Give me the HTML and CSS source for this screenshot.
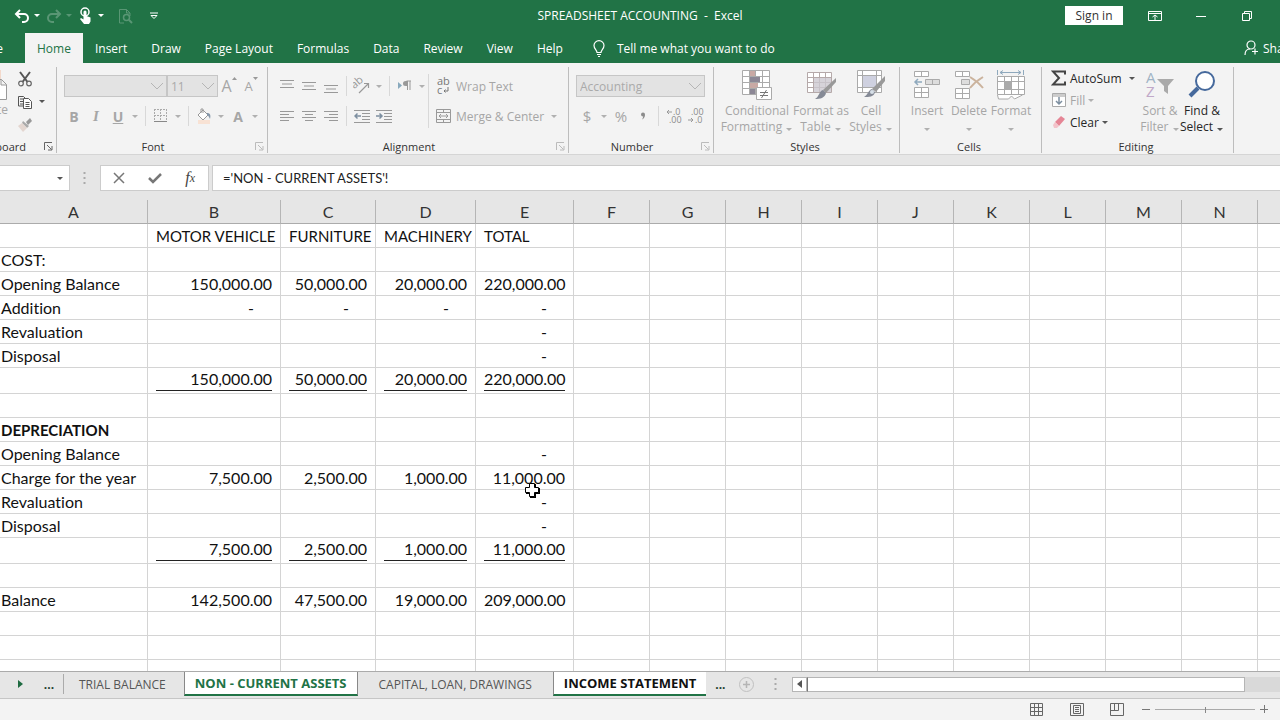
FILE: index.html
```
<!DOCTYPE html>
<html lang="en">
<head>
    <meta charset="UTF-8">
    <meta name="viewport" content="width=device-width, initial-scale=1.0">
    <title>SPREADSHEET ACCOUNTING - Excel</title>
    <link rel="stylesheet" href="styles.css">
</head>
<body>
    <!-- Title bar -->
    <header class="titlebar">
        <div class="quick">
            <button class="quick-btn" aria-label="Undo"><svg width="16" height="16" viewBox="0 0 16 16"><path d="M6 2L2 6l4 4M2 6h8a4 4 0 0 1 0 8H8" fill="none" stroke="#fff" stroke-width="2"/></svg></button>
            <span class="arrow white"></span>
            <button class="quick-btn dim" aria-label="Redo"><svg width="16" height="16" viewBox="0 0 16 16"><path d="M10 2l4 4-4 4M14 6H6a4 4 0 0 0 0 8h2" fill="none" stroke="#fff" stroke-width="2"/></svg></button>
            <span class="arrow white dim"></span>
            <button class="quick-btn" aria-label="Touch mode"><svg width="16" height="18" viewBox="0 0 16 18"><circle cx="7" cy="5" r="4" fill="none" stroke="#fff" stroke-width="1.5"/><path d="M5.500 5a1.500 1.500 0 0 1 3 0v4l4 1.500v4L11 17H6l-4-5 1-1 2.500 1.500z" fill="#fff"/></svg></button>
            <span class="arrow white"></span>
            <button class="quick-btn dim" aria-label="Print preview"><svg width="16" height="16" viewBox="0 0 16 16"><path d="M6 15H1.500V1.500h7L12 5v3M8.500 1.500V5H12" fill="none" stroke="#fff"/><circle cx="8.500" cy="9.500" r="3" fill="none" stroke="#fff" stroke-width="1.500"/><path d="M11 12l3 3" stroke="#fff" stroke-width="2"/></svg></button>
            <button class="quick-btn" aria-label="Customize toolbar"><svg width="10" height="8" viewBox="0 0 10 8"><path d="M1 1h8M2 3.500h6L5 6.500z" fill="none" stroke="#fff"/></svg></button>
        </div>
        <div class="doc-name">SPREADSHEET ACCOUNTING &nbsp;-&nbsp; Excel</div>
        <div class="window-tools">
            <button class="sign-in">Sign in</button>
            <button class="window-btn" aria-label="Ribbon options"><svg width="14" height="12" viewBox="0 0 14 12"><path d="M.5 1.500h13v9H.5zM.5 3.500h13M7 10V5M4.500 7L7 5l2.500 2" fill="none" stroke="#fff"/></svg></button>
            <button class="window-btn" aria-label="Minimize"><svg width="10" height="12" viewBox="0 0 10 12"><path d="M0 6.500h10" stroke="#fff"/></svg></button>
            <button class="window-btn" aria-label="Restore"><svg width="12" height="12" viewBox="0 0 12 12"><path d="M1.500 3.500h7v7h-7zM3.500 3.500v-2h7v7h-2" fill="none" stroke="#fff"/></svg></button>
        </div>
    </header>

    <nav class="tabs">
        <a class="tab file" href="#">File</a>
        <a class="tab active" href="#">Home</a>
        <a class="tab" href="#">Insert</a>
        <a class="tab" href="#">Draw</a>
        <a class="tab" href="#">Page Layout</a>
        <a class="tab" href="#">Formulas</a>
        <a class="tab" href="#">Data</a>
        <a class="tab" href="#">Review</a>
        <a class="tab" href="#">View</a>
        <a class="tab" href="#">Help</a>
        <a class="tab tell" href="#"><svg width="12" height="17" viewBox="0 0 12 17"><path d="M4 12.500C4 10 1 9 1 5.500a5 4.800 0 0 1 10 0C11 9 8 10 8 12.500zM4 14.500h4M5 16.500h2" fill="none" stroke="#fff" stroke-width="1.200"/></svg>Tell me what you want to do</a>
        <a class="tab share" href="#"><svg width="15" height="16" viewBox="0 0 15 16"><circle cx="7" cy="5" r="4" fill="none" stroke="#fff" stroke-width="1.200"/><path d="M1 15c0-4 2-6 5-6M11 8.500v6M8 11.500h6" fill="none" stroke="#fff" stroke-width="1.200"/></svg>Share</a>
    </nav>

    <!-- Ribbon -->
    <section class="ribbon">
        <div class="group clipboard">
            <div class="group-body">
                <button class="paste off"><svg width="26" height="34" viewBox="0 0 26 34"><path d="M1 3h18v27H1z" fill="#f3d9cb"/><path d="M8.500 12.500h11l5 5v15h-16zM19 12.500v5.500h5.500" fill="#fff" stroke="#999"/></svg>Paste</button>
                <div class="stack">
                    <button class="tool" aria-label="Cut"><svg width="16" height="16" viewBox="0 0 16 16"><path d="M3 1l7.500 10M13 1L5.500 11" stroke="#555" stroke-width="2"/><circle cx="4" cy="12.500" r="2.300" fill="none" stroke="#666" stroke-width="1.200"/><circle cx="12" cy="12.500" r="2.300" fill="none" stroke="#666" stroke-width="1.200"/></svg></button>
                    <div class="row"><button class="tool" aria-label="Copy"><svg width="16" height="14" viewBox="0 0 16 14"><path d="M6 11H1.500V1.500h5L8 3M3 4h3M3 6.500h3M3 9h3" fill="none" stroke="#555"/><path d="M6.500 3.500h5l3 3v7h-8zM8.500 7.500h4M8.500 9.500h4M8.500 11.500h4" fill="#fff" stroke="#555"/></svg></button><span class="arrow dark"></span></div>
                    <button class="tool off" aria-label="Format painter"><svg width="16" height="14" viewBox="0 0 16 14"><path d="M9 4l4-4 2 3-4 4z" fill="#999"/><path d="M6 3l6 5-2 2-5-5z" fill="#aaa"/><path d="M5 5l5 5-4 4-5-6z" fill="#e3d6d0"/></svg></button>
                </div>
            </div>
            <div class="group-label"><span>Clipboard</span><svg class="launch" width="9" height="9" viewBox="0 0 9 9"><path d="M.5 8V.5H8M3 3l4.500 4.500M8 4v4H4" fill="none" stroke="#666"/></svg></div>
        </div>

        <div class="group font">
            <div class="group-body stack">
                <div class="row combos">
                    <label class="combo font-name"><select disabled aria-label="Font name"><option></option></select><svg width="14" height="8" viewBox="0 0 14 8"><path d="M1 1l6 6 6-6" fill="none" stroke="#b5b5b5"/></svg></label>
                    <label class="combo font-size"><select disabled aria-label="Font size"><option>11</option></select><svg width="14" height="8" viewBox="0 0 14 8"><path d="M1 1l6 6 6-6" fill="none" stroke="#b5b5b5"/></svg></label>
                    <button class="tool off grow" aria-label="Increase font size">A<svg width="5" height="12" viewBox="0 0 5 12"><path d="M0 5l2.500-3L5 5z" fill="#999"/></svg></button>
                    <button class="tool off shrink" aria-label="Decrease font size">A<svg width="5" height="12" viewBox="0 0 5 12"><path d="M0 2l2.500 3L5 2z" fill="#999"/></svg></button>
                </div>
                <div class="row">
                    <button class="tool off bold">B</button>
                    <button class="tool off italic">I</button>
                    <button class="tool off underline">U</button><span class="arrow"></span>
                    <span class="sep"></span>
                    <button class="tool off" aria-label="Borders"><svg width="14" height="14" viewBox="0 0 14 14"><path d="M.5 0v13M6.500 0v13M12.500 0v13M0 .5h13M0 6.500h13" fill="none" stroke="#aaa" stroke-dasharray="2 1"/><path d="M0 12.500h13" stroke="#888"/></svg></button><span class="arrow"></span>
                    <span class="sep"></span>
                    <button class="tool off" aria-label="Fill color"><svg width="16" height="16" viewBox="0 0 16 16"><path d="M2 12h12v4H2z" fill="#f8e2d4"/><path d="M2 7l5-5 5 5-5 5zM5 5V1h2v4" fill="#fff" stroke="#999"/><path d="M11 5c3 0 4 2 3 6-1-2-1-3-3-4z" fill="#8395a8"/></svg></button><span class="arrow"></span>
                    <button class="tool off bold">A</button><span class="arrow"></span>
                </div>
            </div>
            <div class="group-label"><span>Font</span><svg class="launch" width="9" height="9" viewBox="0 0 9 9"><path d="M.5 8V.5H8M3 3l4.500 4.500M8 4v4H4" fill="none" stroke="#bbb"/></svg></div>
        </div>

        <div class="group alignment">
            <div class="group-body">
                <div class="stack">
                    <div class="row">
                        <button class="tool off" aria-label="Top align"><svg width="14" height="16" viewBox="0 0 14 16"><path d="M0 2.500h14M2 6h10M0 9.500h14" stroke="#999"/></svg></button>
                        <button class="tool off" aria-label="Middle align"><svg width="14" height="16" viewBox="0 0 14 16"><path d="M0 4.500h14M2 8h10M0 11.500h14" stroke="#999"/></svg></button>
                        <button class="tool off" aria-label="Bottom align"><svg width="14" height="16" viewBox="0 0 14 16"><path d="M0 7.500h14M2 11h10M0 14.500h14" stroke="#999"/></svg></button>
                        <span class="sep"></span>
                        <button class="tool off" aria-label="Orientation"><svg width="18" height="18" viewBox="0 0 18 18"><text class="glyph" x="0" y="9" transform="rotate(-40 5 9)">ab</text><path d="M6 16l9-9M11 6.500h4.500V11" fill="none" stroke="#999" stroke-width="1.200"/></svg></button><span class="arrow"></span>
                        <span class="sep"></span>
                        <button class="tool off" aria-label="Text direction"><svg width="14" height="12" viewBox="0 0 14 12"><path d="M0 2l4 3.500L0 9z" fill="#88a9bd"/><path d="M8.500 6V1H13M9.500 1v9M12 1v9" fill="none" stroke="#999"/><circle cx="7.500" cy="3.500" r="2.500" fill="#999"/></svg></button><span class="arrow"></span>
                    </div>
                    <div class="row">
                        <button class="tool off" aria-label="Align left"><svg width="14" height="12" viewBox="0 0 14 12"><path d="M0 1.500h14M0 4.500h9M0 7.500h14M0 10.500h9" stroke="#999"/></svg></button>
                        <button class="tool off" aria-label="Center"><svg width="14" height="12" viewBox="0 0 14 12"><path d="M0 1.500h14M3 4.500h8M0 7.500h14M3 10.500h8" stroke="#999"/></svg></button>
                        <button class="tool off" aria-label="Align right"><svg width="14" height="12" viewBox="0 0 14 12"><path d="M0 1.500h14M5 4.500h9M0 7.500h14M5 10.500h9" stroke="#999"/></svg></button>
                        <span class="sep"></span>
                        <button class="tool off" aria-label="Decrease indent"><svg width="16" height="14" viewBox="0 0 16 14"><path d="M0 1.500h16M8 4.500h8M8 7.500h8M8 10.500h8M0 13.500h16" stroke="#999"/><path d="M7 7H1M3.500 4.500L1 7l2.500 2.500" fill="none" stroke="#7d8fa0" stroke-width="1.500"/></svg></button>
                        <button class="tool off" aria-label="Increase indent"><svg width="16" height="14" viewBox="0 0 16 14"><path d="M0 1.500h16M8 4.500h8M8 7.500h8M8 10.500h8M0 13.500h16" stroke="#999"/><path d="M0 7h6M3.500 4.500L6 7 3.500 9.500" fill="none" stroke="#7d8fa0" stroke-width="1.500"/></svg></button>
                    </div>
                </div>
                <span class="sep tall"></span>
                <div class="stack">
                    <button class="wide off"><svg width="16" height="18" viewBox="0 0 16 18"><text class="glyph dark" x="1" y="8">ab</text><text class="glyph dark" x="1" y="17">c</text><path d="M12 10v4H8M9.500 12.500L8 14l1.500 1.500" fill="none" stroke="#777"/></svg>Wrap Text</button>
                    <button class="wide off"><svg width="16" height="16" viewBox="0 0 16 16"><path d="M.5 1.500h14v13H.5zM.5 4.500h14M.5 11.500h14M7.500 1.500v3M7.500 11.500v3M3 8h9M5 6L3 8l2 2M10 6l2 2-2 2" fill="none" stroke="#999"/></svg>Merge &amp; Center <span class="arrow"></span></button>
                </div>
            </div>
            <div class="group-label"><span>Alignment</span><svg class="launch" width="9" height="9" viewBox="0 0 9 9"><path d="M.5 8V.5H8M3 3l4.500 4.500M8 4v4H4" fill="none" stroke="#bbb"/></svg></div>
        </div>

        <div class="group number">
            <div class="group-body stack">
                <div class="row"><label class="combo format"><select disabled aria-label="Number format"><option>Accounting</option></select><svg width="14" height="8" viewBox="0 0 14 8"><path d="M1 1l6 6 6-6" fill="none" stroke="#b5b5b5"/></svg></label></div>
                <div class="row">
                    <button class="tool off sign">$</button><span class="arrow"></span>
                    <button class="tool off sign">%</button>
                    <button class="tool off comma" aria-label="Comma style"><svg width="6" height="8" viewBox="0 0 6 8"><circle cx="3" cy="2.500" r="2" fill="#8c8c8c"/><path d="M5 2.500C5 5 4 6.500 2 7.500c1-1.500 1-2 1-3z" fill="#8c8c8c"/></svg></button>
                    <span class="sep"></span>
                    <button class="tool off" aria-label="Increase decimal"><svg width="16" height="16" viewBox="0 0 16 16"><path d="M6 4H1M3 2L1 4l2 2" fill="none" stroke="#999"/><text class="digits" x="7" y="7">.0</text><text class="digits" x="3" y="15">.00</text></svg></button>
                    <button class="tool off" aria-label="Decrease decimal"><svg width="16" height="16" viewBox="0 0 16 16"><text class="digits" x="3" y="7">.00</text><path d="M0 12h5M3 10l2 2-2 2" fill="none" stroke="#999"/><text class="digits" x="7" y="15">.0</text></svg></button>
                </div>
            </div>
            <div class="group-label"><span>Number</span><svg class="launch" width="9" height="9" viewBox="0 0 9 9"><path d="M.5 8V.5H8M3 3l4.500 4.500M8 4v4H4" fill="none" stroke="#bbb"/></svg></div>
        </div>

        <div class="group styles">
            <div class="group-body">
                <button class="big off"><svg width="30" height="30" viewBox="0 0 30 30"><path d="M.5.500h27v24H.5zM.5 6.500h27M.5 12.500h27M.5 18.500h27M7.500.500v24M13.500.500v24M20.500.500v24" fill="#fff" stroke="#aaa"/><path d="M8 1h5v5H8z" fill="#c9a9a4"/><path d="M8 7h10v5H8z" fill="#8c8795"/><path d="M8 13h8v5H8z" fill="#c9a9a4"/><path d="M8 19h5v5H8z" fill="#8c8795"/><path d="M14.500 17.500h15v12h-15z" fill="#fff" stroke="#aaa"/><path d="M18 22.500h8M18 25.500h8M24.500 20l-5 8" stroke="#777"/></svg><span>Conditional<br>Formatting <i class="arrow"></i></span></button>
                <button class="big off"><svg width="30" height="30" viewBox="0 0 30 30"><path d="M1.500 2.500h24v20h-24zM1.500 7.500h24M1.500 12.500h24M1.500 17.500h24M7.500 2.500v20M13.500 2.500v20M19.500 2.500v20" fill="#fff" stroke="#b5a9a9"/><path d="M8 8h17v14H8z" fill="#ccc8d0" opacity=".8"/><path d="M30 8v4L20 23l-3-3z" fill="#999"/><path d="M17 20l3 3c-1 5-6 6-11 6 4-2 4-8 8-9z" fill="#858a96"/></svg><span>Format as<br>Table <i class="arrow"></i></span></button>
                <button class="big off"><svg width="30" height="30" viewBox="0 0 30 30"><path d="M1.500.500h24v22h-24zM1.500 5.500h24M1.500 17.500h24M6.500.500v22M20.500.500v22" fill="#fff" stroke="#aaa"/><path d="M7 6h13v11H7z" fill="#cfd1e0"/><path d="M29 6v5L20 22l-4-3z" fill="#999"/><path d="M16 19l3 3c-1 5-6 5-11 5 4-2 4-7 8-8z" fill="#858a96"/><circle cx="16" cy="22" r="2" fill="#d7e0e8"/></svg><span>Cell<br>Styles <i class="arrow"></i></span></button>
            </div>
            <div class="group-label"><span>Styles</span></div>
        </div>

        <div class="group cells">
            <div class="group-body">
                <button class="big off"><svg width="28" height="30" viewBox="0 0 28 30"><path d="M1.500 1.500h14v5h-14zM8.500 1.500v5M1.500 17.500h14v10h-14zM1.500 22.500h14M8.500 17.500v10" fill="#fff" stroke="#aaa"/><path d="M12.500 9.500h14v5h-14zM19.500 9.500v5" fill="#ddd" stroke="#aaa"/><path d="M9 12H2M5 9l-3 3 3 3" fill="none" stroke="#8fa9bd" stroke-width="1.500"/></svg><span>Insert<br><i class="arrow"></i></span></button>
                <button class="big off"><svg width="30" height="30" viewBox="0 0 30 30"><path d="M1.500 1.500h14v5h-14zM8.500 1.500v5M1.500 18.500h14v10h-14zM1.500 23.500h14M8.500 18.500v10" fill="#fff" stroke="#aaa"/><path d="M7.500 9.500h8v5h-8z" fill="#ddd" stroke="#aaa"/><path d="M16 7c5 3 9 6 13 11M29 7c-5 3-9 6-13 11" fill="none" stroke="#cbb39d" stroke-width="2"/></svg><span>Delete<br><i class="arrow"></i></span></button>
                <button class="big off"><svg width="30" height="30" viewBox="0 0 30 30"><path d="M1.500 0v5M27.500 0v5M4 2.500h21M7 .5l-3 2 3 2M22 .5l3 2-3 2" fill="none" stroke="#8fa9bd"/><path d="M1.500 6.500h27v18h-27zM1.500 11.500h27M1.500 19.500h27M8.500 6.500v18M15.500 6.500v18M22.500 6.500v18" fill="#fff" stroke="#aaa"/><path d="M9 11h7v9H9z" fill="#aaa"/><path d="M1.500 25l1 4h10l3-3 3 3 8-4" fill="#fff" stroke="#aaa"/></svg><span>Format<br><i class="arrow"></i></span></button>
            </div>
            <div class="group-label"><span>Cells</span></div>
        </div>

        <div class="group editing">
            <div class="group-body">
                <div class="edit-list">
                    <button class="edit"><svg width="16" height="16" viewBox="0 0 16 16"><path d="M14 4.500v-3H2l6 6.500-6 6.500h12v-3" fill="none" stroke="#444" stroke-width="2"/></svg>AutoSum<span class="arrow dark last"></span></button>
                    <button class="edit off"><svg width="16" height="16" viewBox="0 0 16 16"><path d="M1.500 1.500h13v13h-13z" fill="#fff" stroke="#aaa"/><path d="M2 2h12v3H2z" fill="#ccc"/><path d="M8 5v7M5 9l3 3 3-3" fill="none" stroke="#7d8fa0" stroke-width="1.500"/></svg>Fill<span class="arrow"></span></button>
                    <button class="edit"><svg width="16" height="16" viewBox="0 0 16 16"><path d="M10 2l4 3-6 7-4-4z" fill="#e58595"/><path d="M4 8l4 4-2 2H3l-1-3z" fill="#f3c3ca"/></svg>Clear<span class="arrow dark"></span></button>
                </div>
                <button class="big off"><svg width="30" height="30" viewBox="0 0 30 30"><text class="az blue" x="1" y="13">A</text><text class="az violet" x="1" y="27">Z</text><path d="M12 9h17l-6 7v8l-4-3v-5z" fill="#aaa"/></svg><span>Sort &amp;<br>Filter <i class="arrow"></i></span></button>
                <button class="big"><svg width="30" height="30" viewBox="0 0 30 30"><circle cx="18" cy="11" r="9" fill="#fff" stroke="#46699c" stroke-width="2"/><path d="M11 18l-8 8" stroke="#46699c" stroke-width="4"/></svg><span>Find &amp;<br>Select <i class="arrow dark"></i></span></button>
            </div>
            <div class="group-label"><span>Editing</span></div>
        </div>
    </section>

    <!-- Formula bar -->
    <section class="formula-bar">
        <div class="name-box"><span class="arrow dark"></span></div>
        <svg class="grip" width="3" height="14" viewBox="0 0 3 14"><path d="M1.500 1v12" stroke="#aaa" stroke-width="2" stroke-dasharray="2 3"/></svg>
        <div class="formula-tools">
            <button class="fx-btn" aria-label="Cancel"><svg width="14" height="12" viewBox="0 0 14 12"><path d="M2 1l10 10M12 1L2 11" stroke="#777" stroke-width="1.500"/></svg></button>
            <button class="fx-btn" aria-label="Enter"><svg width="14" height="12" viewBox="0 0 14 12"><path d="M1 6l4 4 8-8" fill="none" stroke="#777" stroke-width="2.500"/></svg></button>
            <button class="fx-btn fx"><i>f</i><small>x</small></button>
        </div>
        <input class="formula" type="text" aria-label="Formula" value="='NON - CURRENT ASSETS'!">
    </section>

    <!-- Worksheet -->
    <main class="sheet">
        <table>
            <colgroup>
                <col class="col-a"><col class="col-b"><col class="col-c"><col class="col-d"><col class="col-e">
                <col span="10">
            </colgroup>
            <thead>
                <tr><th>A</th><th>B</th><th>C</th><th>D</th><th>E</th><th>F</th><th>G</th><th>H</th><th>I</th><th>J</th><th>K</th><th>L</th><th>M</th><th>N</th><th></th></tr>
            </thead>
            <tbody>
                <tr class="heads"><td></td><td>MOTOR VEHICLE</td><td>FURNITURE</td><td>MACHINERY</td><td>TOTAL</td><td></td><td></td><td></td><td></td><td></td><td></td><td></td><td></td><td></td><td></td></tr>
                <tr><td>COST:</td><td></td><td></td><td></td><td></td><td></td><td></td><td></td><td></td><td></td><td></td><td></td><td></td><td></td><td></td></tr>
                <tr><td>Opening Balance</td><td>150,000.00</td><td>50,000.00</td><td>20,000.00</td><td>220,000.00</td><td></td><td></td><td></td><td></td><td></td><td></td><td></td><td></td><td></td><td></td></tr>
                <tr><td>Addition</td><td class="nil">-</td><td class="nil">-</td><td class="nil">-</td><td class="nil">-</td><td></td><td></td><td></td><td></td><td></td><td></td><td></td><td></td><td></td><td></td></tr>
                <tr><td>Revaluation</td><td></td><td></td><td></td><td class="nil">-</td><td></td><td></td><td></td><td></td><td></td><td></td><td></td><td></td><td></td><td></td></tr>
                <tr><td>Disposal</td><td></td><td></td><td></td><td class="nil">-</td><td></td><td></td><td></td><td></td><td></td><td></td><td></td><td></td><td></td><td></td></tr>
                <tr class="total"><td></td><td><span>150,000.00</span></td><td><span>50,000.00</span></td><td><span>20,000.00</span></td><td><span>220,000.00</span></td><td></td><td></td><td></td><td></td><td></td><td></td><td></td><td></td><td></td><td></td></tr>
                <tr><td></td><td></td><td></td><td></td><td></td><td></td><td></td><td></td><td></td><td></td><td></td><td></td><td></td><td></td><td></td></tr>
                <tr><td><b>DEPRECIATION</b></td><td></td><td></td><td></td><td></td><td></td><td></td><td></td><td></td><td></td><td></td><td></td><td></td><td></td><td></td></tr>
                <tr><td>Opening Balance</td><td></td><td></td><td></td><td class="nil">-</td><td></td><td></td><td></td><td></td><td></td><td></td><td></td><td></td><td></td><td></td></tr>
                <tr><td>Charge for the year</td><td>7,500.00</td><td>2,500.00</td><td>1,000.00</td><td class="hovered">11,000.00<svg class="cursor" width="16" height="16" viewBox="0 0 16 16"><path d="M6 2h6v4h4v6h-4v4H6v-4H2V6h4z" fill="#000"/><path d="M5.500 1.500h5v4h4v5h-4v4h-5v-4h-4v-5h4z" fill="#fff" stroke="#000"/></svg></td><td></td><td></td><td></td><td></td><td></td><td></td><td></td><td></td><td></td><td></td></tr>
                <tr><td>Revaluation</td><td></td><td></td><td></td><td class="nil">-</td><td></td><td></td><td></td><td></td><td></td><td></td><td></td><td></td><td></td><td></td></tr>
                <tr><td>Disposal</td><td></td><td></td><td></td><td class="nil">-</td><td></td><td></td><td></td><td></td><td></td><td></td><td></td><td></td><td></td><td></td></tr>
                <tr class="total"><td></td><td><span>7,500.00</span></td><td><span>2,500.00</span></td><td><span>1,000.00</span></td><td><span>11,000.00</span></td><td></td><td></td><td></td><td></td><td></td><td></td><td></td><td></td><td></td><td></td></tr>
                <tr><td></td><td></td><td></td><td></td><td></td><td></td><td></td><td></td><td></td><td></td><td></td><td></td><td></td><td></td><td></td></tr>
                <tr><td>Balance</td><td>142,500.00</td><td>47,500.00</td><td>19,000.00</td><td>209,000.00</td><td></td><td></td><td></td><td></td><td></td><td></td><td></td><td></td><td></td><td></td></tr>
                <tr><td></td><td></td><td></td><td></td><td></td><td></td><td></td><td></td><td></td><td></td><td></td><td></td><td></td><td></td><td></td></tr>
                <tr><td></td><td></td><td></td><td></td><td></td><td></td><td></td><td></td><td></td><td></td><td></td><td></td><td></td><td></td><td></td></tr>
                <tr><td></td><td></td><td></td><td></td><td></td><td></td><td></td><td></td><td></td><td></td><td></td><td></td><td></td><td></td><td></td></tr>
            </tbody>
        </table>
    </main>

    <!-- Sheet tabs -->
    <section class="sheet-bar">
        <button class="next" aria-label="Next sheet"><svg width="6" height="8" viewBox="0 0 6 8"><path d="M0 0l5 4-5 4z" fill="#1e6b41"/></svg></button>
        <button class="more">...</button>
        <button class="sheet-tab first">TRIAL BALANCE</button>
        <button class="sheet-tab current">NON - CURRENT ASSETS</button>
        <button class="sheet-tab">CAPITAL, LOAN, DRAWINGS</button>
        <button class="sheet-tab selected">INCOME STATEMENT</button>
        <button class="more">...</button>
        <button class="add" aria-label="New sheet"><svg width="15" height="15" viewBox="0 0 15 15"><circle cx="7.500" cy="7.500" r="7" fill="none" stroke="#c0c0c0"/><path d="M7.500 4v7M4 7.500h7" stroke="#b5b5b5" stroke-width="1.500"/></svg></button>
        <svg class="grip" width="3" height="14" viewBox="0 0 3 14"><path d="M1.500 1v12" stroke="#aaa" stroke-width="2" stroke-dasharray="2 3"/></svg>
        <div class="scroll">
            <button class="scroll-left" aria-label="Scroll left"><svg width="5" height="8" viewBox="0 0 5 8"><path d="M5 0L0 4l5 4z" fill="#555"/></svg></button>
            <div class="thumb"></div>
        </div>
    </section>

    <footer class="status">
        <button class="view" aria-label="Normal view"><svg width="14" height="14" viewBox="0 0 14 14"><path d="M.5.500h12v12H.5zM4.500.500v12M8.500.500v12M.5 4.500h12M.5 8.500h12" fill="none" stroke="#666"/></svg></button>
        <button class="view" aria-label="Page layout view"><svg width="14" height="14" viewBox="0 0 14 14"><path d="M.5.500h13v12H.5zM3.500 2.500h7v8h-7zM5 4.500h4M5 6.500h4M5 8.500h4" fill="none" stroke="#666"/></svg></button>
        <button class="view" aria-label="Page break view"><svg width="14" height="14" viewBox="0 0 14 14"><path d="M.5.500h13v12H.5zM.5 7.500h8M4.500.500v7M8.500.500v7" fill="none" stroke="#666"/></svg></button>
        <button class="zoom" aria-label="Zoom out"><svg width="9" height="9" viewBox="0 0 9 9"><path d="M0 4.500h8" stroke="#777"/></svg></button>
        <input class="zoom-level" type="range" min="10" max="190" value="100" aria-label="Zoom">
        <button class="zoom" aria-label="Zoom in"><svg width="9" height="9" viewBox="0 0 9 9"><path d="M0 4.500h8M4.500 0v8" stroke="#777"/></svg></button>
    </footer>
</body>
</html>
```
FILE: styles.css
```
* {
    box-sizing: border-box;
}
body {
    margin: 0;
    height: 100vh;
    display: flex;
    flex-direction: column;
    overflow: hidden;
    background-color: #e6e6e6;
    color: #262626;
    font-family: "Open Sans", "Noto Sans", sans-serif;
    font-size: 12px;
}
button {
    display: flex;
    align-items: center;
    justify-content: center;
    margin: 0;
    padding: 0;
    border: none;
    background: none;
    color: inherit;
    font: inherit;
    white-space: nowrap;
}
svg {
    display: block;
    flex: none;
}

/* Title bar */
.titlebar {
    display: grid;
    grid-template-columns: 1fr auto 1fr;
    align-items: center;
    height: 31px;
    flex: none;
    background-color: #217346;
    color: #fff;
}
.quick {
    display: flex;
    align-items: center;
    padding-left: 12px;
}
.quick-btn {
    width: 20px;
    height: 24px;
}
.quick-btn:nth-last-child(-n+2) {
    margin-left: 8px;
}
.quick .arrow {
    width: 10px;
    margin-right: 2px;
}
.dim {
    opacity: 0.25;
}
.window-tools {
    display: flex;
    align-items: center;
    justify-content: flex-end;
    padding-right: 10px;
}
.sign-in {
    width: 58px;
    height: 19px;
    margin-right: 9px;
    background-color: #fff;
    color: #333;
}
.window-btn {
    width: 46px;
    height: 24px;
}

/* Small drop-down arrow */
.arrow {
    display: inline-flex;
    align-items: center;
    justify-content: center;
    width: 12px;
    height: 8px;
    flex: none;
    color: #b0b0b0;
}
.arrow::before {
    content: "";
    border: 3px solid transparent;
    border-top-color: currentColor;
    border-bottom: none;
}
.arrow.white {
    color: #fff;
}
.arrow.dark {
    color: #555;
}

/* Ribbon tabs */
.tabs {
    display: flex;
    height: 32px;
    flex: none;
    background-color: #217346;
    overflow: hidden;
}
.tab {
    display: flex;
    align-items: center;
    padding: 0 12px;
    margin-top: 2px;
    color: #fff;
    text-decoration: none;
    white-space: nowrap;
}
.tab.file {
    width: 25px;
    justify-content: flex-end;
    padding: 0 22px 0 0;
}
.tab.active {
    background-color: #f3f3f3;
    color: #217346;
}
.tab.tell {
    padding-left: 18px;
    gap: 12px;
}
.tab.share {
    width: 36px;
    margin-left: auto;
    padding: 0;
    gap: 4px;
}

/* Ribbon */
.ribbon {
    display: flex;
    height: 92px;
    flex: none;
    background-color: #f3f3f3;
    border-bottom: 1px solid #d5d5d5;
}
.group {
    display: flex;
    flex-direction: column;
    flex: none;
    margin: 4px 0 1px;
    border-right: 1px solid #bdbdbd;
}
.group-body {
    display: flex;
    flex: 1;
}
.group-label {
    display: flex;
    align-items: center;
    height: 14px;
    padding-right: 3px;
    color: #333;
    font-size: 11px;
}
.group-label span {
    flex: 1;
    text-align: center;
}
.launch {
    margin-left: 6px;
}
.stack {
    display: flex;
    flex-direction: column;
}
.row {
    display: flex;
    align-items: center;
    height: 30px;
}
.group .stack {
    padding-top: 4px;
}
.tool {
    width: 22px;
    height: 22px;
}
.off {
    color: #a6a6a6;
}
.sep {
    width: 1px;
    height: 20px;
    margin: 0 4px;
    background-color: #d8d8d8;
}
.sep.tall {
    height: 54px;
    margin: 7px 7px 0 0;
}
.combo {
    display: grid;
    align-items: center;
    height: 22px;
}
.combo select,
.combo svg {
    grid-area: 1 / 1;
}
.combo svg {
    justify-self: end;
    margin-right: 3px;
}
.combo select {
    appearance: none;
    width: 100%;
    height: 22px;
    padding: 0 3px;
    border: 1px solid #c6c6c6;
    border-radius: 0;
    background-color: #e3e3e3;
    color: #aaa;
    font: inherit;
    opacity: 1;
}
.combos {
    padding-left: 1px;
}
.font-name {
    width: 103px;
}
.font-size {
    width: 51px;
}
.format {
    width: 129px;
}

.clipboard {
    width: 57px;
    overflow: hidden;
}
.clipboard .group-body {
    justify-content: flex-end;
}
.clipboard .stack {
    width: 42px;
    flex: none;
    padding-top: 0;
}
.clipboard .row,
.clipboard .stack > .tool {
    height: 23px;
}
.clipboard .group-label {
    justify-content: flex-end;
    gap: 12px;
}
.clipboard .group-label span {
    flex: none;
}
.paste {
    flex-direction: column;
    align-items: flex-end;
    justify-content: flex-start;
    width: 36px;
    margin-right: 6px;
    flex: none;
}

.font {
    width: 211px;
}
.font .group-body {
    padding-left: 6px;
}
.bold,
.underline {
    font-weight: bold;
    font-size: 14px;
}
.underline {
    text-decoration: underline;
}
.italic {
    font-family: "Liberation Serif", serif;
    font-style: italic;
    font-weight: bold;
    font-size: 15px;
}
.grow {
    font-size: 16px;
}
.shrink {
    font-size: 13px;
}
.grow svg,
.shrink svg {
    align-self: flex-start;
}

.alignment {
    width: 301px;
}
.alignment .group-body {
    padding-left: 8px;
}
.wide {
    justify-content: flex-start;
    gap: 4px;
    height: 30px;
}
.glyph {
    fill: #999;
    font-size: 11px;
}
.glyph.dark {
    fill: #777;
}
.digits {
    fill: #8c8c8c;
    font-size: 9px;
}

.number {
    width: 145px;
}
.number .group-body {
    padding-left: 7px;
}
.sign {
    font-size: 15px;
}

.big {
    flex-direction: column;
    justify-content: flex-start;
    gap: 3px;
    width: 42px;
    padding-top: 3px;
    line-height: 16px;
}
.big .arrow {
    width: 8px;
}
.styles {
    width: 186px;
}
.styles .group-body {
    padding-left: 4px;
}
.styles .big {
    width: 50px;
}
.styles .big:first-child {
    width: 78px;
}
.cells {
    width: 142px;
}
.cells .group-body {
    padding-left: 6px;
}
.editing {
    width: 192px;
}
.editing .group-body {
    padding-left: 9px;
}
.edit-list {
    width: 88px;
}
.edit {
    gap: 3px;
    justify-content: flex-start;
    height: 22px;
    width: 100%;
}
.edit .arrow {
    width: 6px;
}
.edit .last {
    margin-left: auto;
    margin-right: 4px;
}
.az {
    font-size: 15px;
}
.blue {
    fill: #9fb3c5;
}
.violet {
    fill: #c0a8c8;
}

/* Formula bar */
.formula-bar {
    display: flex;
    align-items: center;
    height: 45px;
    padding-top: 1px;
    flex: none;
}
.name-box {
    display: flex;
    align-items: center;
    justify-content: flex-end;
    width: 70px;
    height: 26px;
    padding-right: 3px;
    background-color: #fff;
    border: 1px solid #ccc;
    border-left: none;
}
.formula-bar .grip {
    margin: 0 14px 0 13px;
}
.formula-tools {
    display: flex;
    width: 109px;
    height: 26px;
    margin-right: 3px;
    background-color: #fff;
    border: 1px solid #ccc;
}
.fx-btn {
    flex: 1;
}
.fx {
    font-family: "Liberation Serif", serif;
    font-size: 16px;
    color: #444;
}
.fx small {
    font-size: 12px;
    font-style: italic;
}
.formula {
    flex: 1;
    height: 26px;
    padding: 0 10px;
    border: 1px solid #ccc;
    border-right: none;
    border-radius: 0;
    background-color: #fff;
    color: #222;
    font-family: Lato, sans-serif;
    font-size: 13px;
}

/* Worksheet */
.sheet {
    flex: 1;
    min-height: 0;
    overflow: hidden;
    background-color: #fff;
    font-family: Lato, sans-serif;
    font-size: 16px;
    font-variant-ligatures: none;
}
.sheet table {
    width: 1334px;
    table-layout: fixed;
    border-collapse: separate;
    border-spacing: 0;
}
.sheet col {
    width: 76px;
}
.sheet .col-a {
    width: 148px;
}
.sheet .col-b {
    width: 133px;
}
.sheet .col-c {
    width: 95px;
}
.sheet .col-d {
    width: 100px;
}
.sheet .col-e {
    width: 98px;
}
.sheet th {
    height: 24px;
    padding: 0;
    background-color: #e6e6e6;
    border-right: 1px solid #b5b5b5;
    border-bottom: 1px solid #ababab;
    font-weight: normal;
    color: #333;
    line-height: 22px;
}
.sheet td {
    height: 24px;
    padding: 0 8px;
    border-right: 1px solid #d4d4d4;
    border-bottom: 1px solid #d4d4d4;
    color: #111;
    line-height: 22px;
    text-align: right;
    white-space: nowrap;
}
.sheet td:first-child {
    padding: 0 0 0 1px;
    text-align: left;
}
.sheet .heads td {
    padding-right: 0;
    font-size: 15px;
    text-align: left;
}
.sheet b {
    font-size: 15px;
}
.sheet .nil {
    padding-right: 26px;
}
.sheet .total td {
    height: 26px;
    vertical-align: top;
}
.total span {
    display: block;
    border-bottom: 1px solid #222;
}
.hovered {
    position: relative;
}
.cursor {
    position: absolute;
    left: 48px;
    top: 16px;
}

/* Sheet tabs */
.sheet-bar {
    display: flex;
    align-items: center;
    height: 28px;
    padding-bottom: 2px;
    flex: none;
    border-top: 1px solid #ababab;
    border-bottom: 1px solid #c6c6c6;
    color: #555;
}
.next {
    width: 42px;
}
.more {
    width: 14px;
    color: #1e4030;
    font-weight: bold;
}
.sheet-tab {
    height: 20px;
    padding: 0 21px;
}
.sheet-tab.first {
    margin-left: 7px;
    padding: 0 18px 0 15px;
    border-left: 1px solid #ababab;
}
.sheet-tab.current,
.sheet-tab.selected {
    align-self: flex-start;
    height: 24px;
    padding: 0 10px;
    background-color: #fff;
    border-left: 1px solid #888;
    border-bottom: 2px solid #217346;
    color: #111;
    font-size: 13px;
    font-weight: bold;
}
.sheet-tab.current {
    border-right: 1px solid #888;
    color: #217346;
}
.sheet-tab.selected + .more {
    margin-left: 7px;
}
.add {
    margin-left: 12px;
}
.sheet-bar .grip {
    margin: 0 15px 0 20px;
}
.scroll {
    display: flex;
    flex: 1;
    height: 15px;
    padding-right: 35px;
    background-color: #d9d9d9;
}
.scroll-left {
    width: 15px;
    background-color: #fff;
    border: 1px solid #b5b5b5;
}
.thumb {
    flex: 1;
    background-color: #fff;
    border: 1px solid #b5b5b5;
    border-left-color: #777;
}

/* Status bar */
.status {
    display: flex;
    align-items: center;
    justify-content: flex-end;
    height: 21px;
    padding-right: 7px;
    flex: none;
    background-color: #f3f3f3;
}
.view {
    width: 40px;
}
.zoom {
    width: 18px;
}
.zoom-level {
    appearance: none;
    width: 100px;
    height: 12px;
    margin: 0;
    background: linear-gradient(#aaa, #aaa) center / 100% 1px no-repeat;
}
.zoom-level::-webkit-slider-thumb {
    appearance: none;
    width: 1px;
    height: 6px;
    background-color: #888;
}
```
